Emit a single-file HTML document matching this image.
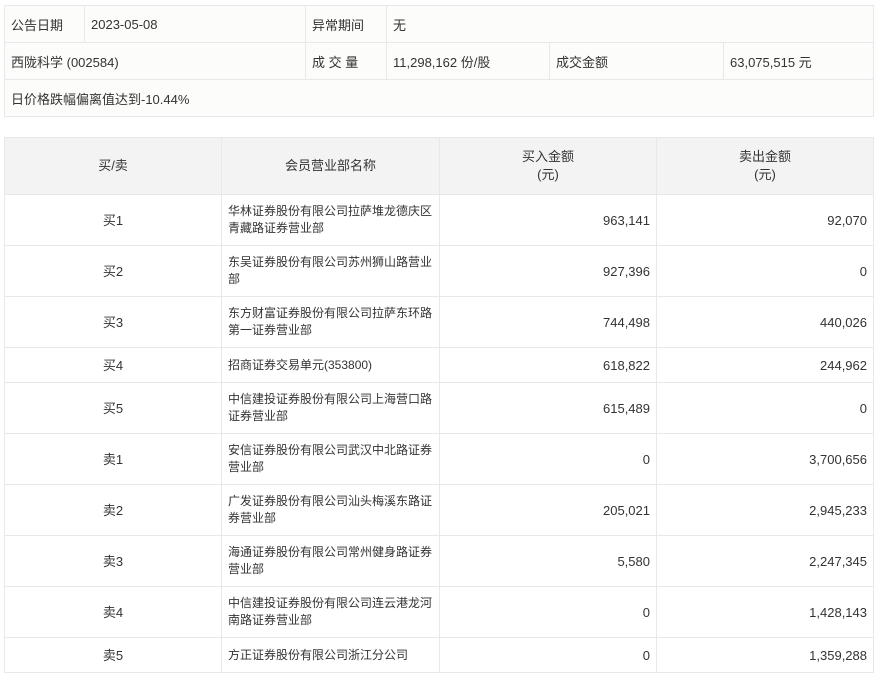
<!DOCTYPE html>
<html><head><meta charset="utf-8"><style>
body{margin:0;background:#fff;font-family:"Liberation Sans","Noto Sans CJK SC",sans-serif;font-size:13px;color:#333;}
table{border-collapse:collapse;position:absolute;left:4px;table-layout:fixed;}
td,th{border:1px solid #e8e8e8;padding:0 6px;font-weight:normal;}
#t1{top:5px;width:869px;background:#fcfcfa;}
#t1 td{height:36px;}
#t2{top:137px;width:869px;}
#t2 th{background:#f3f3f3;height:56px;line-height:18px;text-align:center;}
#t2 td{line-height:17px;}
#t2 td.n{font-size:12px;padding:0 4px 0 6px;}
#t2 td.c{text-align:center}
#t2 td.r{text-align:right}
tr.two td{height:50px}
tr.one td{height:34px}
</style></head><body>
<table id="t1">
<colgroup><col style="width:80px"><col style="width:221px"><col style="width:81px"><col style="width:163px"><col style="width:174px"><col style="width:150px"></colgroup>
<tr><td>公告日期</td><td>2023-05-08</td><td>异常期间</td><td colspan="3">无</td></tr>
<tr><td colspan="2">西陇科学 (002584)</td><td>成 交 量</td><td>11,298,162 份/股</td><td>成交金额</td><td>63,075,515 元</td></tr>
<tr><td colspan="6">日价格跌幅偏离值达到-10.44%</td></tr>
</table>
<table id="t2">
<colgroup><col style="width:217px"><col style="width:218px"><col style="width:217px"><col style="width:217px"></colgroup>
<tr><th>买/卖</th><th>会员营业部名称</th><th>买入金额<br>(元)</th><th>卖出金额<br>(元)</th></tr>
<tr class="two"><td class="c">买1</td><td class="n">华林证券股份有限公司拉萨堆龙德庆区青藏路证券营业部</td><td class="r">963,141</td><td class="r">92,070</td></tr>
<tr class="two"><td class="c">买2</td><td class="n">东吴证券股份有限公司苏州狮山路营业部</td><td class="r">927,396</td><td class="r">0</td></tr>
<tr class="two"><td class="c">买3</td><td class="n">东方财富证券股份有限公司拉萨东环路第一证券营业部</td><td class="r">744,498</td><td class="r">440,026</td></tr>
<tr class="one"><td class="c">买4</td><td class="n">招商证券交易单元(353800)</td><td class="r">618,822</td><td class="r">244,962</td></tr>
<tr class="two"><td class="c">买5</td><td class="n">中信建投证券股份有限公司上海营口路证券营业部</td><td class="r">615,489</td><td class="r">0</td></tr>
<tr class="two"><td class="c">卖1</td><td class="n">安信证券股份有限公司武汉中北路证券营业部</td><td class="r">0</td><td class="r">3,700,656</td></tr>
<tr class="two"><td class="c">卖2</td><td class="n">广发证券股份有限公司汕头梅溪东路证券营业部</td><td class="r">205,021</td><td class="r">2,945,233</td></tr>
<tr class="two"><td class="c">卖3</td><td class="n">海通证券股份有限公司常州健身路证券营业部</td><td class="r">5,580</td><td class="r">2,247,345</td></tr>
<tr class="two"><td class="c">卖4</td><td class="n">中信建投证券股份有限公司连云港龙河南路证券营业部</td><td class="r">0</td><td class="r">1,428,143</td></tr>
<tr class="one"><td class="c">卖5</td><td class="n">方正证券股份有限公司浙江分公司</td><td class="r">0</td><td class="r">1,359,288</td></tr>
</table>
</body></html>
